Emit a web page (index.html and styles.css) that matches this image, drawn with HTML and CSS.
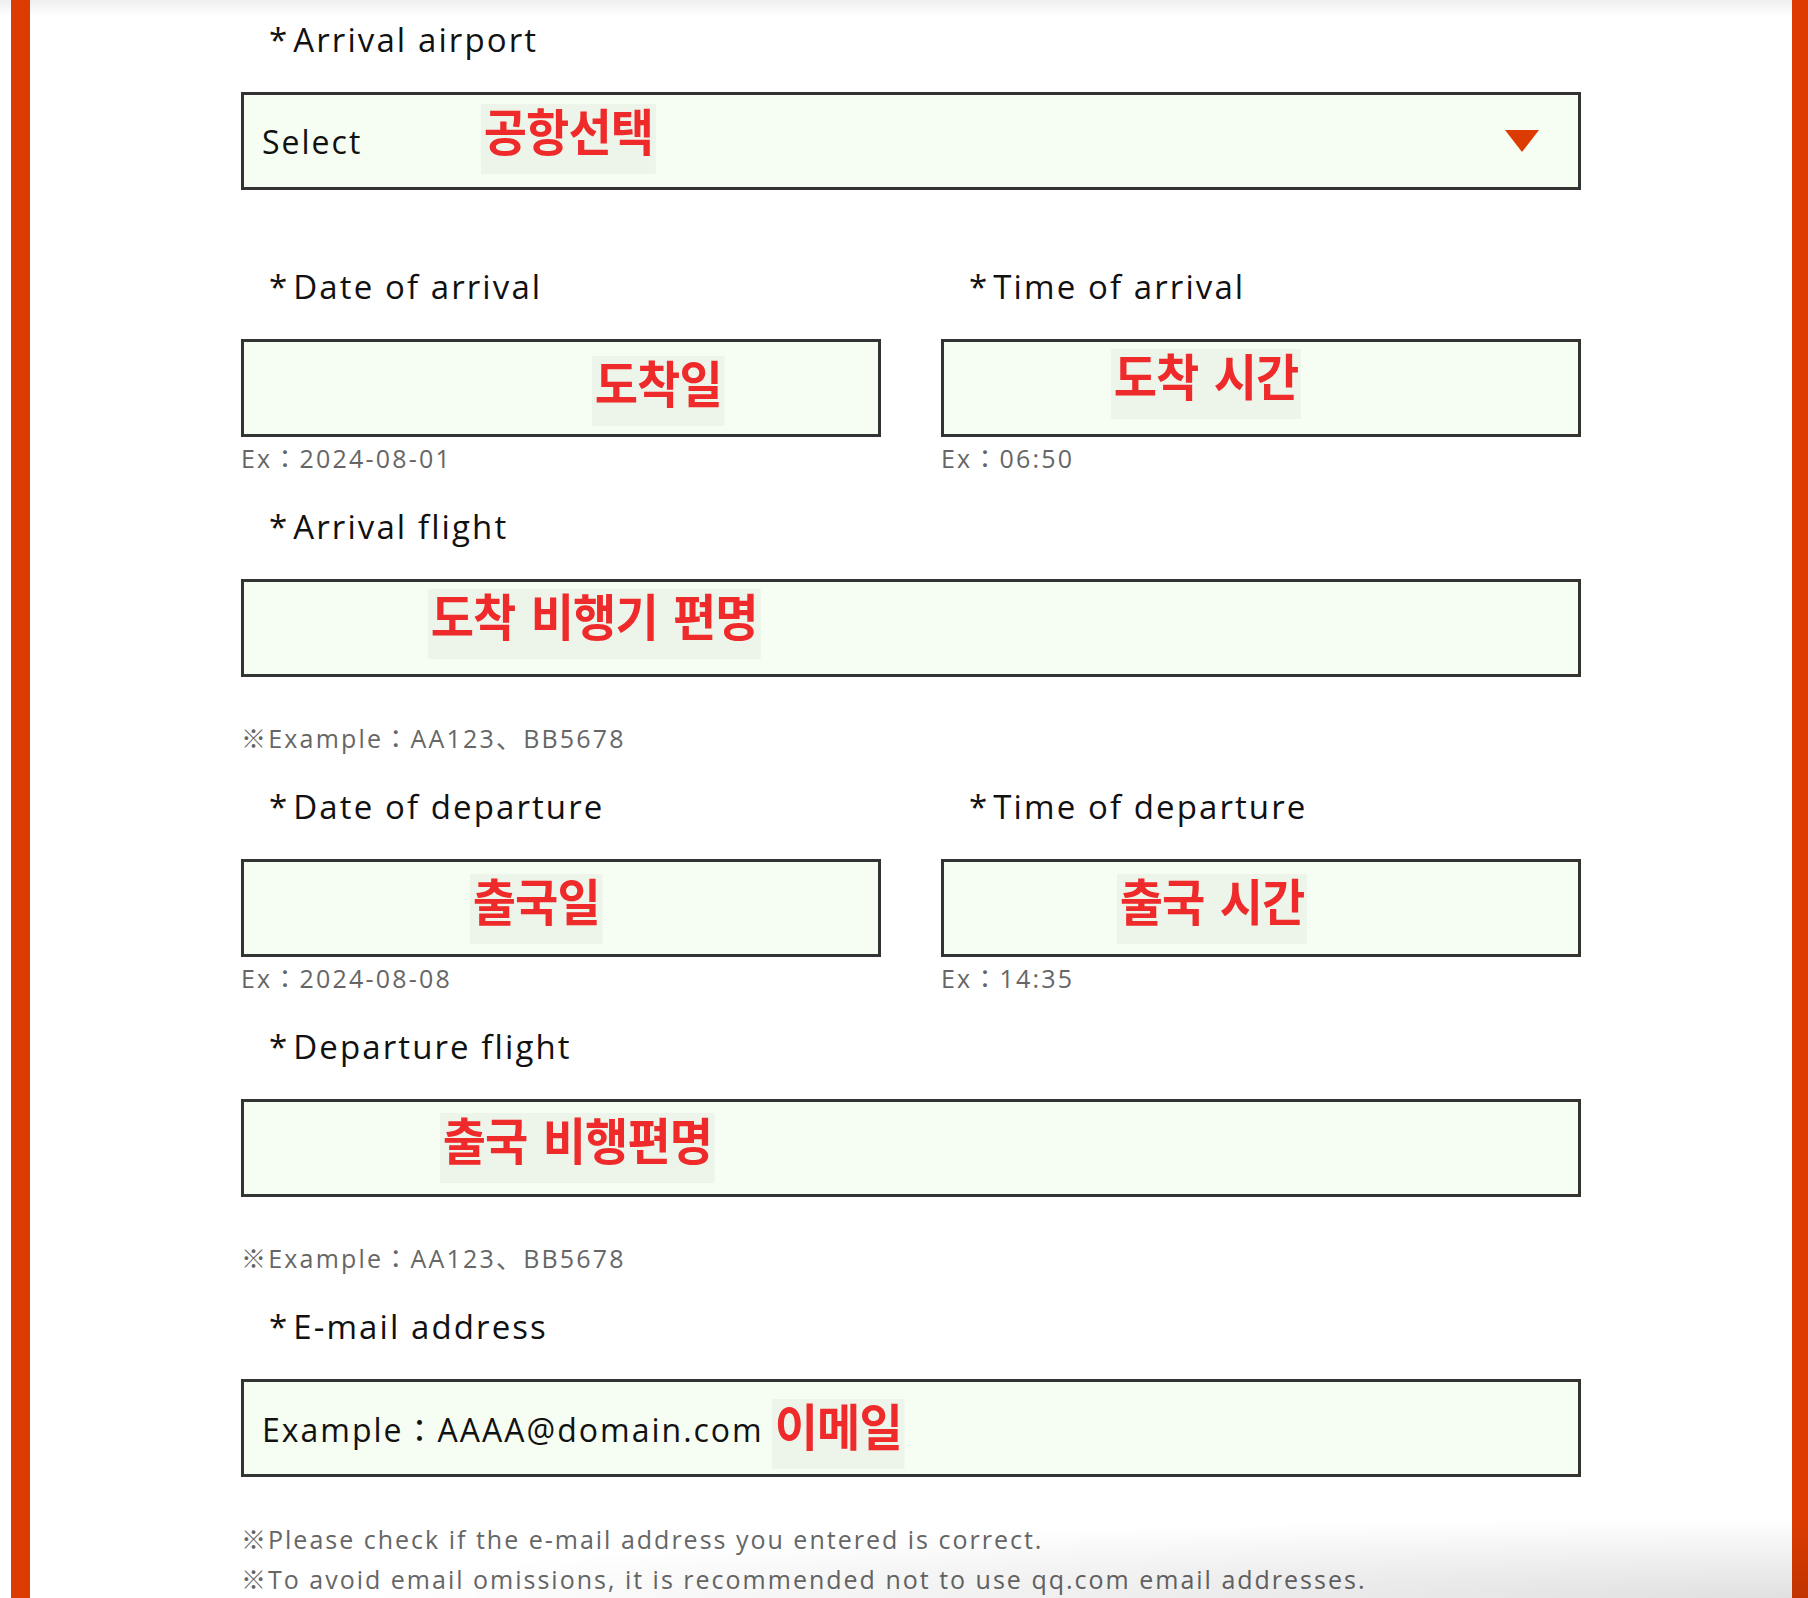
FILE: index.html
```html
<!DOCTYPE html>
<html lang="en">

<head>
  <meta charset="UTF-8" />
  <meta name="viewport" content="width=device-width, initial-scale=1.0" />
  <title>Flight information</title>
  <link rel="stylesheet" href="styles.css">
</head>

<body>
  <div class="page">
    <form class="flight-form">

      <div class="field field-airport">
        <label class="field-label"><span class="req">*</span>Arrival airport</label>
        <div class="box box-select">
          <span class="box-text">Select</span>
          <span class="arrow"></span>
          <span class="mark mark-airport">공항선택</span>
        </div>
      </div>

      <div class="field-row">
        <div class="field">
          <label class="field-label"><span class="req">*</span>Date of arrival</label>
          <div class="box">
            <span class="mark mark-arr-date">도착일</span>
          </div>
          <p class="hint">Ex：2024-08-01</p>
        </div>
        <div class="field">
          <label class="field-label"><span class="req">*</span>Time of arrival</label>
          <div class="box">
            <span class="mark mark-arr-time">도착 시간</span>
          </div>
          <p class="hint">Ex：06:50</p>
        </div>
      </div>

      <div class="field">
        <label class="field-label"><span class="req">*</span>Arrival flight</label>
        <div class="box">
          <span class="mark mark-arr-flight">도착 비행기 편명</span>
        </div>
        <p class="hint hint-wide">※Example：AA123、BB5678</p>
      </div>

      <div class="field-row">
        <div class="field">
          <label class="field-label"><span class="req">*</span>Date of departure</label>
          <div class="box">
            <span class="mark mark-dep-date">출국일</span>
          </div>
          <p class="hint">Ex：2024-08-08</p>
        </div>
        <div class="field">
          <label class="field-label"><span class="req">*</span>Time of departure</label>
          <div class="box">
            <span class="mark mark-dep-time">출국 시간</span>
          </div>
          <p class="hint">Ex：14:35</p>
        </div>
      </div>

      <div class="field">
        <label class="field-label"><span class="req">*</span>Departure flight</label>
        <div class="box">
          <span class="mark mark-dep-flight">출국 비행편명</span>
        </div>
        <p class="hint hint-wide">※Example：AA123、BB5678</p>
      </div>

      <div class="field">
        <label class="field-label"><span class="req">*</span>E-mail address</label>
        <div class="box">
          <span class="box-text">Example：AAAA@domain.com</span>
          <span class="mark mark-inline">이메일</span>
        </div>
        <div class="notes">
          <p>※Please check if the e-mail address you entered is correct.</p>
          <p>※To avoid email omissions, it is recommended not to use qq.com email addresses.</p>
        </div>
      </div>

    </form>
  </div>

  <div class="bottom-shade"></div>
</body>

</html>
```

FILE: styles.css
```css
* {
  box-sizing: border-box;
}

html,
body {
  margin: 0;
  padding: 0;
}

body {
  background: linear-gradient(#eeeeee, #ffffff 16px) no-repeat, #ffffff;
  font-family: "Open Sans", "Noto Sans CJK JP", sans-serif;
  color: #111;
}

.page {
  height: 1598px;
  margin-left: 11px;
  padding-top: 18px;
  border-left: 19px solid #dc3c02;
  border-right: 16px solid #dc3c02;
  overflow: hidden;
}

.flight-form {
  display: flex;
  flex-direction: column;
  gap: 29px;
  width: 1340px;
  margin: 0 auto;
}

.field-airport {
  margin-bottom: 46px;
}

.field-row {
  display: grid;
  grid-template-columns: 1fr 1fr;
  gap: 60px;
}

.field-label {
  display: block;
  padding-left: 28px;
  margin-bottom: 30px;
  font-size: 33px;
  line-height: 44px;
  letter-spacing: 2.1px;
}

.req {
  margin-right: 4px;
}

.box {
  position: relative;
  display: flex;
  align-items: center;
  height: 98px;
  padding: 0 18px;
  border: 3px solid #333;
  background-color: #f6fdf2;
  font-size: 32px;
  letter-spacing: 2px;
}

.arrow {
  margin-left: auto;
  margin-right: 21px;
  border-left: 17px solid transparent;
  border-right: 17px solid transparent;
  border-top: 22px solid #dc3c02;
}

.hint {
  margin: 3px 0 0;
  font-size: 25px;
  line-height: 36px;
  color: #666;
  letter-spacing: 2.2px;
}

.hint-wide {
  margin-top: 43px;
}

.notes {
  margin-top: 42px;
}

.notes p {
  margin: 0;
  font-size: 25px;
  line-height: 40px;
  color: #666;
  letter-spacing: 2px;
}

/* red korean notes pasted over the inputs */
.mark {
  position: absolute;
  padding: 0 3px 20px;
  background-color: #edf4ea;
  color: #ee2a2a;
  font-family: "Noto Sans CJK KR", sans-serif;
  font-weight: 700;
  font-size: 50px;
  line-height: 50px;
  letter-spacing: -1px;
  word-spacing: 6px;
  white-space: nowrap;
  transform: scaleX(0.94);
  transform-origin: left top;
}

.mark-airport { left: 237px; top: 9px; }
.mark-arr-date { left: 348px; top: 14px; }
.mark-arr-time { left: 167px; top: 7px; }
.mark-arr-flight { left: 184px; top: 7px; }
.mark-dep-date { left: 226px; top: 12px; }
.mark-dep-time { left: 173px; top: 12px; }
.mark-dep-flight { left: 196px; top: 11px; }

.mark-inline {
  position: static;
  margin-left: 8px;
  margin-top: 12px;
}

.bottom-shade {
  position: fixed;
  left: 0;
  right: 0;
  bottom: 0;
  height: 90px;
  background: radial-gradient(ellipse 1450px 80px at 100% 100%, rgba(0, 0, 0, 0.12), rgba(0, 0, 0, 0));
  pointer-events: none;
}
```
